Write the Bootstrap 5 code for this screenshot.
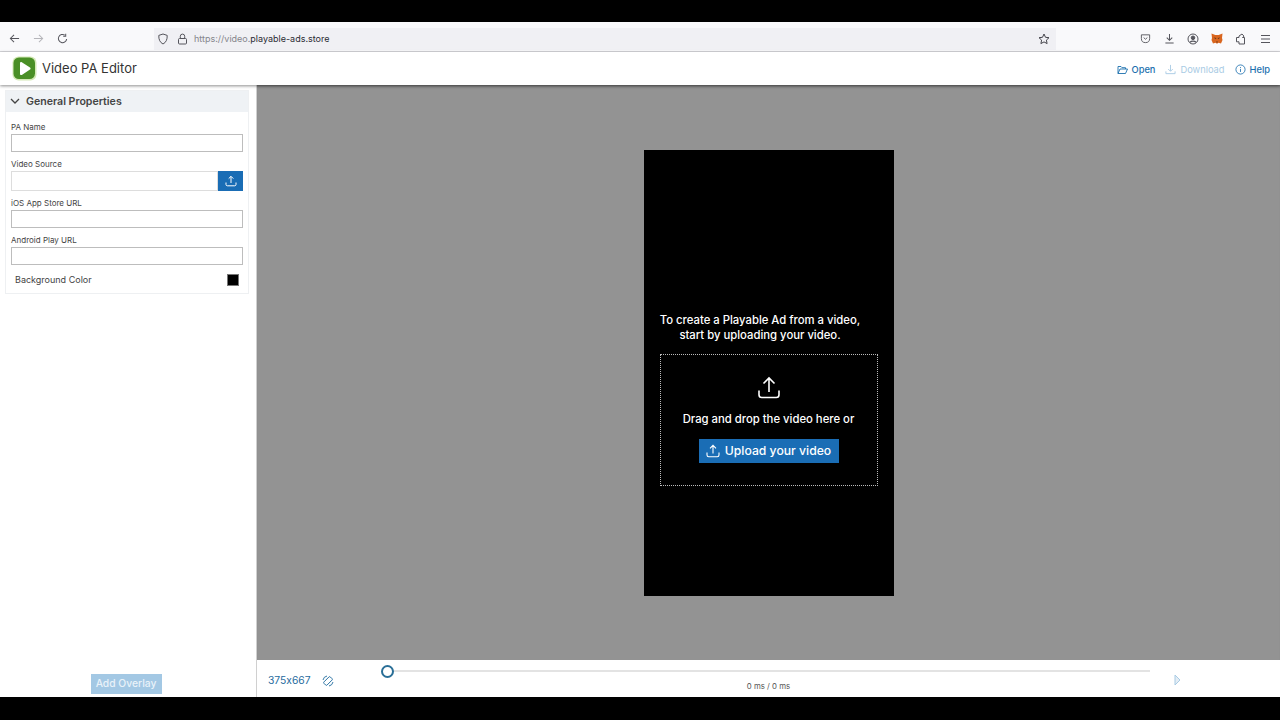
<!DOCTYPE html>
<html lang="en">
<head>
  <meta charset="UTF-8">
  <meta name="viewport" content="width=device-width, initial-scale=1">
  <title>Video PA Editor</title>
  <link rel="stylesheet" href="https://cdn.jsdelivr.net/npm/bootstrap@5.3.0/dist/css/bootstrap.min.css">
  <style>
    html, body { height: 100%; overflow: hidden; }
    body { background: #000; font-family: Inter, "Liberation Sans", sans-serif; color: #333; font-feature-settings: "calt" 0; }
    .screen { width: 1280px; height: 720px; padding: 22px 0 23px; }

    /* browser chrome */
    .browser-bar { height: 30px; background: #f9f9fb; border-bottom: 1px solid #d8d8dc; flex: none; color: #55555c; padding: 4px 0 0 2px; }
    .tool-btn { width: 24px; height: 22px; }
    .url-bar { width: 902px; height: 22px; margin-left: 80px; background: #f0f0f4; font-size: 9px; padding: 0 3px; color: #85858c; }
    .url-bar b { font-weight: 400; color: #2b2b33; }
    .url-text { margin-left: 6px; padding-top: 1px; }
    .right-tools { margin-left: 77px; }

    /* app header */
    .app-head { height: 33px; background: #fff; flex: none; padding: 0 10px 0 12px; box-shadow: 0 1px 3px rgba(0,0,0,.45); position: relative; z-index: 2; }
    .app-title { font-size: 13px; color: #333; margin-left: 5px; }
    .head-link { font-size: 9.3px; color: #1b6fae; font-weight: 500; }
    .head-link.is-off { color: #a9cbe4; font-weight: 400; }
    .head-links { gap: 10px; margin-top: 2px; }

    /* left column */
    .side-col { width: 257px; flex: none; background: #fff; border-right: 1px solid #d0d0d0; padding: 5px 7px 0 5px; }
    .prop-panel { border: 1px solid #eef0f2; height: 204px; }
    .prop-head { height: 21px; background: #eff2f5; padding-left: 4px; font-size: 10.6px; font-weight: 600; color: #444; gap: 6px; }
    .prop-body { padding: 0 5px; }
    .prop-label { font-size: 8px; line-height: 11px; color: #444; margin: 0; display: block; }
    .prop-input { display: block; width: 100%; height: 18px; border: 1px solid #bdbdbd; border-radius: 0; background: #fff; }
    .prop-input.is-tall { height: 20px; border-color: #ddd; }
    .upload-mini { width: 25px; height: 20px; background: #1a6db5; flex: none; }
    .color-swatch { width: 12px; height: 12px; background: #000; border: 1px solid #777; }
    .color-row { font-size: 9px; color: #444; padding: 0 4px; margin-top: 8px; }
    .add-overlay { background: #a3c8e4; color: #e9f2f9; font-size: 10.3px; font-weight: 500; width: 71px; height: 20px; border: 0; border-radius: 0; padding: 0; }

    /* stage */
    .stage { background: #939393; box-shadow: inset 0 3px 3px -2px rgba(0,0,0,.25); }
    .phone { width: 250px; height: 446px; background: #000; color: #fff; margin-top: 1px; }
    .phone-msg { font-size: 11.3px; line-height: 15px; font-weight: 500; text-align: center; width: 220px; margin: 163px 0 0 -17px; }
    .drop-zone { width: 218px; height: 132px; border: 1px dotted #bbb; margin-top: 11px; padding-top: 21px; }
    .drop-text { font-size: 11.3px; font-weight: 500; margin-top: 12px; line-height: 15px; }
    .upload-big { background: #1a6db5; color: #fff; width: 140px; height: 24px; border: 0; border-radius: 0; font-size: 12.2px; font-weight: 500; margin-top: 12px; padding: 0; gap: 5px; }

    /* timeline */
    .time-bar { height: 37px; background: #fff; flex: none; }
    .size-text { font-size: 10.3px; color: #1f6b9e; margin-left: 11px; width: 71px; gap: 11px; height: 41px; }
    .slider-col { width: 763px; margin-left: 48px; }
    .slider-line { height: 2px; background: #e3e3e3; margin-top: 10px; position: relative; }
    .slider-knob { position: absolute; left: -6px; top: -5.5px; width: 13px; height: 13px; border: 2px solid #2a6f97; border-radius: 50%; background: #fff; }
    .time-text { font-size: 7.8px; color: #555; text-align: center; margin-top: 9px; line-height: 11px; }
    .play-mark { margin-left: 24px; height: 40px; }
  </style>
</head>
<body>
<div class="screen d-flex flex-column">
  <!-- browser toolbar -->
  <div class="browser-bar d-flex align-items-center">
    <div class="d-flex align-items-center">
      <span class="tool-btn d-flex align-items-center justify-content-center">
        <svg width="11" height="11" viewBox="0 0 12 12" fill="none" stroke="#55555c" stroke-width="1.1"><path d="M11 6H1.500M5.500 2 1.500 6l4 4"/></svg>
      </span>
      <span class="tool-btn d-flex align-items-center justify-content-center">
        <svg width="11" height="11" viewBox="0 0 12 12" fill="none" stroke="#b5b5ba" stroke-width="1.1"><path d="M1 6h9.500M6.500 2l4 4-4 4"/></svg>
      </span>
      <span class="tool-btn d-flex align-items-center justify-content-center">
        <svg width="11" height="11" viewBox="0 0 12 12" fill="none" stroke="#55555c" stroke-width="1.1"><path d="M10.500 6.500A4.500 4.500 0 1 1 8.500 2.300"/><path d="M9.500 .8v2.700H6.800"/></svg>
      </span>
    </div>
    <div class="url-bar d-flex align-items-center">
      <svg width="12" height="12" viewBox="0 0 12 12" fill="none" stroke="#55555c" stroke-width="1"><path d="M6 1 1.800 2.400C1.600 6.500 3 9.500 6 11c3-1.500 4.400-4.500 4.200-8.600z"/></svg>
      <svg style="margin-left:8px" width="11" height="12" viewBox="0 0 11 12" fill="none" stroke="#55555c" stroke-width="1"><rect x="1.500" y="5.500" width="8" height="5.500" rx="1"/><path d="M3.300 5.500V3.300a2.200 2.200 0 0 1 4.400 0v2.200"/></svg>
      <span class="url-text">https://video.<b>playable-ads.store</b></span>
      <svg class="ms-auto" style="margin-right:3px" width="12" height="12" viewBox="0 0 12 12" fill="none" stroke="#45454c" stroke-width="1"><path d="m6 1 1.500 3.300 3.500.4-2.600 2.400.7 3.500L6 8.900l-3.100 1.700.7-3.500L1 4.700l3.500-.4z"/></svg>
    </div>
    <div class="right-tools d-flex align-items-center">
      <span class="tool-btn d-flex align-items-center justify-content-center">
        <svg width="11" height="11" viewBox="0 0 12 12" fill="none" stroke="#55555c" stroke-width="1"><path d="M1.500 2h9v4a4.500 4.500 0 0 1-9 0z"/><path d="m4 5 2 1.800L8 5"/></svg>
      </span>
      <span class="tool-btn d-flex align-items-center justify-content-center">
        <svg width="11" height="11" viewBox="0 0 12 12" fill="none" stroke="#55555c" stroke-width="1.1"><path d="M6 1v6.500M3 5l3 3 3-3M1.500 10.800h9"/></svg>
      </span>
      <span class="tool-btn d-flex align-items-center justify-content-center">
        <svg width="12" height="12" viewBox="0 0 12 12" fill="none" stroke="#55555c" stroke-width="1"><circle cx="6" cy="6" r="5"/><circle cx="6" cy="4.800" r="1.800" fill="#55555c"/><path d="M3 9.300c1.500-1.600 4.500-1.600 6 0" stroke-width="1.400"/></svg>
      </span>
      <span class="tool-btn d-flex align-items-center justify-content-center">
        <svg width="12" height="11" viewBox="0 0 12 11"><path fill="#d9661f" d="M.5.500 4.300 2h3.400L11.500.500 11 5l.5 2-1.500 3.500-2.500-.7-1 .7h-1l-1-.7L2 10.500.5 7l.5-2z"/><path fill="#6b3a1c" d="M4.500 6.300 2.800 4.500l2.700.6zM7.500 6.300l1.700-1.800-2.700.6zM5 8.500h2L6 10z"/></svg>
      </span>
      <span class="tool-btn d-flex align-items-center justify-content-center">
        <svg width="12" height="12" viewBox="0 0 12 12" fill="none" stroke="#55555c" stroke-width="1"><path d="M1.500 4.500h2.500V3L7 1l2 2.200L7.500 4.500h2V11H4V8.800H1.500z"/></svg>
      </span>
      <span class="tool-btn d-flex align-items-center justify-content-center">
        <svg width="11" height="10" viewBox="0 0 11 10" fill="none" stroke="#55555c" stroke-width="1.100"><path d="M1 1.500h9M1 5h9M1 8.500h9"/></svg>
      </span>
    </div>
  </div>

  <!-- app header -->
  <div class="app-head d-flex align-items-center">
    <svg width="25" height="25" viewBox="0 0 25 25">
      <rect x=".5" y=".5" width="24" height="24" rx="6" fill="#d3e8b5"/>
      <rect x="1.500" y="1.500" width="21.500" height="21.500" rx="5.500" fill="#4a8f26"/>
      <path d="M8 7.200c0-1 1-1.500 1.800-1l8.200 5.300c.8.500.8 1.600 0 2.100l-8.200 5.300c-.8.500-1.800 0-1.800-1z" fill="#fff"/>
    </svg>
    <span class="app-title">Video PA Editor</span>
    <div class="head-links d-flex align-items-center ms-auto">
      <span class="head-link d-flex align-items-center gap-1">
        <svg width="11" height="10" viewBox="0 0 11 10" fill="none" stroke="#1b6fae" stroke-width=".9"><path d="M1 8.500V1.500h3l1 1.200h3.500V4M1 8.500h7.500l2-4.500H3z"/></svg>
        Open
      </span>
      <span class="head-link is-off d-flex align-items-center gap-1">
        <svg width="11" height="11" viewBox="0 0 12 12" fill="none" stroke="#a9cbe4" stroke-width="1"><path d="M6 1v6.500M3.500 5.500 6 8l2.500-2.500M1 8v2.500h10V8"/></svg>
        Download
      </span>
      <span class="head-link d-flex align-items-center gap-1">
        <svg width="11" height="11" viewBox="0 0 12 12" fill="none" stroke="#1b6fae" stroke-width=".9"><circle cx="6" cy="6" r="5"/><path d="M6 5.300v3.400M6 3.300v1"/></svg>
        Help
      </span>
    </div>
  </div>

  <!-- main area -->
  <div class="d-flex flex-grow-1" style="min-height:0">
    <div class="side-col d-flex flex-column">
      <div class="prop-panel">
        <div class="prop-head d-flex align-items-center">
          <svg width="10" height="7" viewBox="0 0 10 7" fill="none" stroke="#444" stroke-width="1.300"><path d="m1 1 4 4 4-4"/></svg>
          General Properties
        </div>
        <div class="prop-body">
          <label class="prop-label" style="margin-top:10px;margin-bottom:1px">PA Name</label>
          <input class="prop-input" type="text">
          <label class="prop-label" style="margin-top:7px;margin-bottom:1px">Video Source</label>
          <div class="d-flex">
            <input class="prop-input is-tall" type="text">
            <span class="upload-mini d-flex align-items-center justify-content-center">
              <svg width="12" height="12" viewBox="0 0 12 12" fill="none" stroke="#fff" stroke-width="1"><path d="M6 8V1.500M3.700 3.600 6 1.300l2.300 2.300M1 7.500v2c0 .8.500 1.300 1.300 1.300h7.400c.8 0 1.300-.5 1.300-1.300v-2"/></svg>
            </span>
          </div>
          <label class="prop-label" style="margin-top:7px;margin-bottom:1px">iOS App Store URL</label>
          <input class="prop-input" type="text">
          <label class="prop-label" style="margin-top:7px;margin-bottom:1px">Android Play URL</label>
          <input class="prop-input" type="text">
          <div class="color-row d-flex align-items-center justify-content-between">
            <span>Background Color</span>
            <span class="color-swatch"></span>
          </div>
        </div>
      </div>
      <div class="mt-auto d-flex justify-content-center" style="padding:0 2px 3px 0">
        <button class="btn add-overlay" type="button">Add Overlay</button>
      </div>
    </div>

    <div class="d-flex flex-column flex-grow-1" style="min-width:0">
      <div class="stage flex-grow-1 d-flex align-items-center justify-content-center">
        <div class="phone d-flex flex-column align-items-center">
          <div class="phone-msg">To create a Playable Ad from a video,<br>start by uploading your video.</div>
          <div class="drop-zone d-flex flex-column align-items-center">
            <svg width="24" height="24" viewBox="0 0 24 24" fill="none" stroke="#fff" stroke-width="1.600"><path d="M12 16V2.500M6.500 7.500 12 2l5.500 5.500M2 14.500v4.300c0 1.600 1 2.700 2.700 2.700h14.600c1.700 0 2.700-1.100 2.700-2.700v-4.300"/></svg>
            <div class="drop-text">Drag and drop the video here or</div>
            <button class="btn upload-big d-flex align-items-center justify-content-center" type="button">
              <svg width="14" height="14" viewBox="0 0 14 14" fill="none" stroke="#fff" stroke-width="1.100"><path d="M7 9.500V1.500M4 4.300 7 1.300l3 3M1 8.500v2.500c0 1 .7 1.700 1.700 1.700h8.600c1 0 1.700-.7 1.700-1.700V8.500"/></svg>
              Upload your video
            </button>
          </div>
        </div>
      </div>
      <div class="time-bar d-flex">
        <div class="size-text d-flex align-items-center">
          <span>375x667</span>
          <svg width="12" height="12" viewBox="0 0 12 12" fill="none" stroke="#1f6b9e" stroke-width=".9"><rect x="3.800" y="1.500" width="4.400" height="9" rx="1" transform="rotate(45 6 6)"/><path d="M1 5A5 5 0 0 1 5 1M11 7A5 5 0 0 1 7 11"/></svg>
        </div>
        <div class="slider-col">
          <div class="slider-line"><span class="slider-knob"></span></div>
          <div class="time-text">0 ms / 0 ms</div>
        </div>
        <div class="play-mark d-flex align-items-center">
          <svg width="7" height="12" viewBox="0 0 7 12" fill="#e3edf5" stroke="#a9cbe4" stroke-width="1"><path d="M1 1v10l5-5z"/></svg>
        </div>
      </div>
    </div>
  </div>
</div>
<script src="https://cdn.jsdelivr.net/npm/bootstrap@5.3.0/dist/js/bootstrap.bundle.min.js"></script>
</body>
</html>
